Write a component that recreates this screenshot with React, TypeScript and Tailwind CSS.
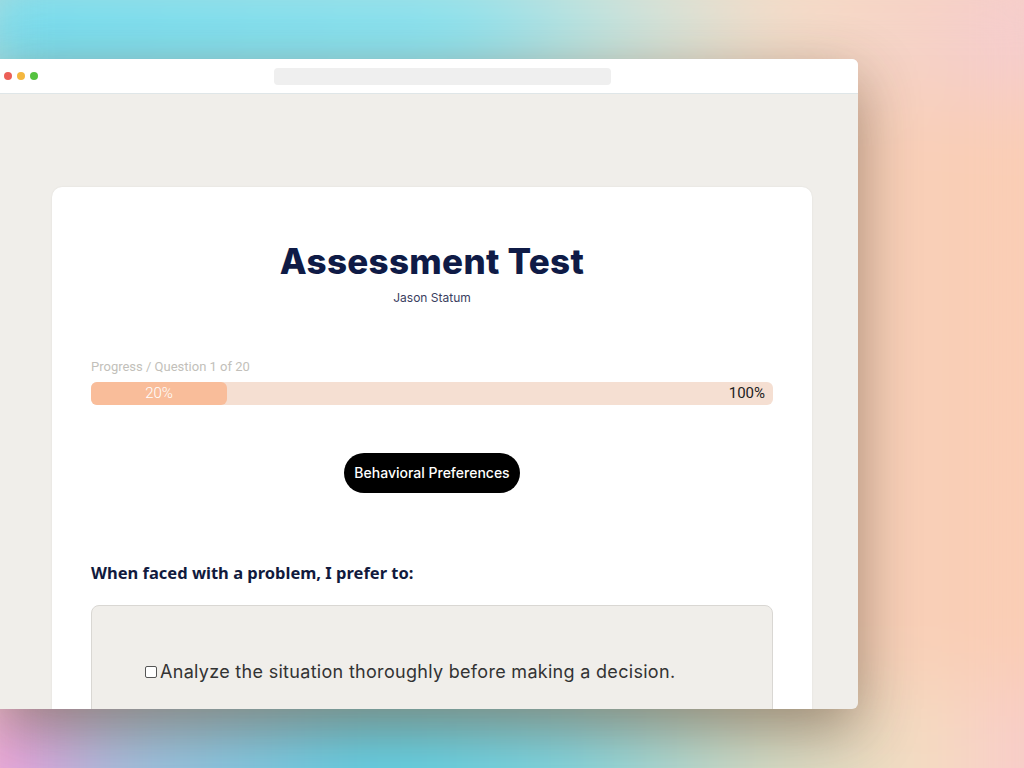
export default function App() {
  return (
    <div className="relative h-[768px] w-[1024px] overflow-hidden bg-[#f8d3bd]">
      {/* soft gradient backdrop */}
      <div className="absolute -inset-[40px] blur-2xl">
        <div className="h-[140px] bg-[linear-gradient(100deg,#6fdcf0_0%,#86e2f0_45%,#cfe3da_62%,#f4dcc8_74%,#f6d0c6_88%,#f3c9d6_100%)]" />
        <div className="h-[590px] bg-[linear-gradient(90deg,#f6dcc4_0%,#f7d8c2_70%,#f9d0b8_85%,#facbb2_100%)]" />
        <div className="h-[200px] bg-[linear-gradient(90deg,#f09ede_4%,#a7c0e0_14%,#5fd0e4_38%,#80d6e0_55%,#d3dcc6_72%,#f8dcc0_88%,#f6c3cf_100%)]" />
      </div>

      <div className="relative pt-[59px]">
        <div className="flex h-[650px] w-[858px] flex-col overflow-hidden rounded-r-[6px] bg-[#f0eeea] shadow-[0_20px_60px_rgba(60,40,20,0.45)]">
          <div className="flex h-[35px] shrink-0 items-center border-b border-[#dfe6e8] bg-white">
            <div className="flex items-center gap-[5px] pl-[4px]">
              <span className="h-[8px] w-[8px] rounded-full bg-[#ec5f57]" />
              <span className="h-[8px] w-[8px] rounded-full bg-[#f4b73f]" />
              <span className="h-[8px] w-[8px] rounded-full bg-[#55c23f]" />
            </div>
            <div className="ml-[236px] h-[17px] w-[337px] rounded-[4px] bg-[#efefef]" />
          </div>

          <div className="flex-1 pl-[52px] pr-[46px] pt-[93px]">
            <div className="h-full rounded-t-[10px] bg-white px-[39px] pt-[54px] shadow-[0_0_2px_rgba(0,0,0,0.08)]">
              <h1 className="text-center font-['Inter',sans-serif] text-[35px] font-extrabold leading-[40px] tracking-[0.3px] text-[#0f1b46]">
                Assessment Test
              </h1>
              <p className="mt-[8px] text-center font-['Inter',sans-serif] text-[12px] text-[#3a4060]">
                Jason Statum
              </p>

              <p className="mt-[50px] font-['Roboto',sans-serif] text-[13px] text-[#c2bfba]">
                Progress / Question 1 of 20
              </p>
              <div className="relative mt-[5px] flex h-[23px] items-center rounded-[6px] bg-[#f5dfd2]">
                <div className="flex h-full w-[136px] items-center justify-center rounded-[6px] bg-[#f9bd9a] font-['Roboto',sans-serif] text-[15px] font-light text-white">
                  20%
                </div>
                <span className="ml-auto pr-[8px] font-['Roboto',sans-serif] text-[15px] text-[#222]">
                  100%
                </span>
              </div>

              <div className="mt-[48px] flex justify-center">
                <button className="h-[40px] rounded-full bg-black px-[10px] font-['Inter',sans-serif] text-[14px] font-medium text-white">
                  Behavioral Preferences
                </button>
              </div>

              <p className="mt-[68px] font-['Noto_Sans',sans-serif] text-[16.5px] font-bold text-[#111a3d]">
                When faced with a problem, I prefer to:
              </p>

              <div className="mt-[20px] h-[120px] rounded-[8px] border border-[#d9d7d3] bg-[#f0eeea] pl-[53px] pt-[52px]">
                <label className="flex items-center gap-[3px] font-['Inter',sans-serif] text-[18px] tracking-[0.3px] text-[#333]">
                  <span className="h-[12px] w-[12px] rounded-[2px] border border-[#555] bg-white" />
                  Analyze the situation thoroughly before making a decision.
                </label>
              </div>
            </div>
          </div>
        </div>
      </div>
    </div>
  );
}
